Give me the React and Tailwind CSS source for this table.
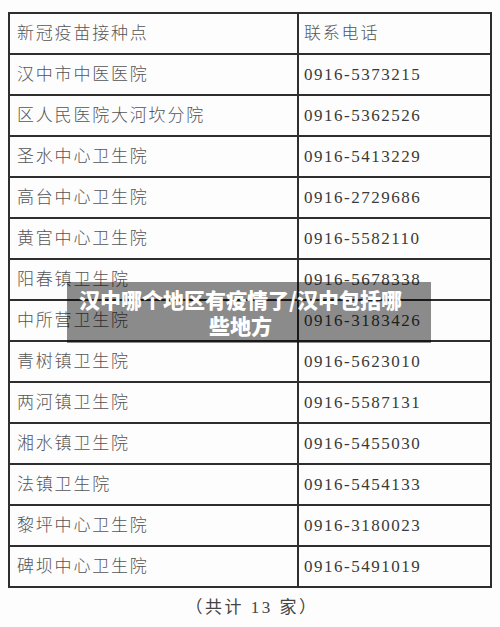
import React from 'react';

const rows = [
  ['新冠疫苗接种点', '联系电话'],
  ['汉中市中医医院', '0916-5373215'],
  ['区人民医院大河坎分院', '0916-5362526'],
  ['圣水中心卫生院', '0916-5413229'],
  ['高台中心卫生院', '0916-2729686'],
  ['黄官中心卫生院', '0916-5582110'],
  ['阳春镇卫生院', '0916-5678338'],
  ['中所营卫生院', '0916-3183426'],
  ['青树镇卫生院', '0916-5623010'],
  ['两河镇卫生院', '0916-5587131'],
  ['湘水镇卫生院', '0916-5455030'],
  ['法镇卫生院', '0916-5454133'],
  ['黎坪中心卫生院', '0916-3180023'],
  ['碑坝中心卫生院', '0916-5491019'],
];

export default function App() {
  return (
    <div className="relative h-[627px] w-[500px] overflow-hidden bg-[#fdfdfd] pt-[12px] font-['Liberation_Serif','Noto_Sans_CJK_SC',serif]">
      <div className="ml-[8px] w-[484px] border-l-2 border-t-2 border-[#2e2e2e]">
        {rows.map(([name, phone], i) => (
          <div key={i} className="flex h-[41px]">
            <div className="flex w-[289px] items-center border-b-2 border-r-2 border-[#2e2e2e] pl-[7px] pt-[1px] text-[17px] font-light tracking-[1.8px] text-[#555]">
              {name}
            </div>
            <div
              className={`flex w-[193px] items-center border-b-2 border-r-2 border-[#2e2e2e] pl-[5px] pt-[1px] ${
                i === 0 ? 'text-[17px] font-light tracking-[1.8px] text-[#555]' : 'text-[17px] tracking-[1.5px] text-[#3a3a3a]'
              }`}
            >
              {phone}
            </div>
          </div>
        ))}
      </div>
      <div className="ml-[4px] mt-[8px] text-center text-[17px] leading-[24px] tracking-[2.5px] text-[#444]">
        （共计 13 家）
      </div>

      <div className="absolute left-[67px] top-[282px] w-[364px] bg-black/45 pb-[5px] pl-[11px] pr-[28px] pt-[4px] text-center font-['Noto_Sans_CJK_SC',sans-serif] text-[21px] font-black leading-[26px] text-white">
        <div className="whitespace-nowrap">汉中哪个地区有疫情了/汉中包括哪</div>
        <div>些地方</div>
      </div>
    </div>
  );
}
